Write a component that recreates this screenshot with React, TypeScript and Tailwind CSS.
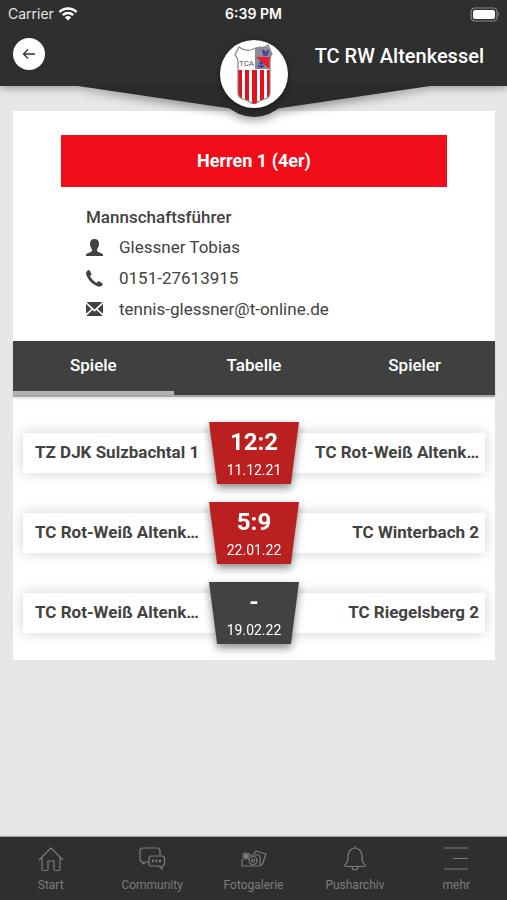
import type { ReactNode } from "react";

const contact = [
  { icon: <UserIcon />, label: "Glessner Tobias" },
  { icon: <PhoneIcon />, label: "0151-27613915", href: "tel:015127613915" },
  { icon: <MailIcon />, label: "tennis-glessner@t-online.de", href: "mailto:tennis-glessner@t-online.de" },
];

const matches = [
  { home: "TZ DJK Sulzbachtal 1", guest: "TC Rot-Weiß Altenk…", score: "12:2", date: "11.12.21", played: true },
  { home: "TC Rot-Weiß Altenk…", guest: "TC Winterbach 2", score: "5:9", date: "22.01.22", played: true },
  { home: "TC Rot-Weiß Altenk…", guest: "TC Riegelsberg 2", score: "-", date: "19.02.22", played: false },
];

function UserIcon() {
  return (
    <svg width="17" height="17" viewBox="0 0 17 17" fill="currentColor">
      <path d="M8.500 0C11.300 0 13 1.700 13 4.500c0 2.200-.8 4.500-2 5.800v1.400c0 .6.700 1 2.400 1.700 2.300.9 3.600 1.400 3.600 2.600v1H0v-1c0-1.200 1.300-1.700 3.600-2.600C5.300 12.700 6 12.300 6 11.700v-1.400C4.800 9 4 6.700 4 4.500 4 1.700 5.700 0 8.500 0z" />
    </svg>
  );
}

function PhoneIcon() {
  return (
    <svg width="17" height="17" viewBox="0 0 17 17" fill="currentColor">
      <path d="M1.800.4C2.700-.1 3.500 0 4 .9l1.300 2.500c.4.800.2 1.400-.5 1.900-.7.500-.8 1-.4 1.700 1.300 2.200 3.200 4.100 5.400 5.400.7.400 1.200.3 1.700-.4.500-.7 1.100-.9 1.900-.5l2.500 1.400c.9.500 1 1.200.5 2-.9 1.500-2.400 2-4.200 1.500C6.600 14.700 1.600 9.400.2 4.200-.2 2.500.4 1.200 1.800.4z" />
    </svg>
  );
}

function MailIcon() {
  return (
    <svg width="17" height="17" viewBox="0 0 17 17" fill="currentColor">
      <path d="M.4 1h16.200L8.500 8.600zM0 2.800l5.400 5.100L0 12.700zM17 2.800v9.900l-5.400-4.800zM6.500 8.900l2 1.900 2-1.900 6.300 6.100H.2z" />
    </svg>
  );
}

function Crest() {
  return (
    <svg width="40" height="60" viewBox="0 0 40 60">
      <defs>
        <clipPath id="shield">
          <path d="M5 3c4 3 8 4 12 3 3-1 6-3 9-3 3 1 6 0 8-2l4 9c-2 2-2 4-2 7v32c0 3-2 5-5 6-4 1-8 3-11 6-3-3-7-5-11-6-3-1-5-3-5-6V18c0-3-1-5-3-7z" />
        </clipPath>
      </defs>
      <g clipPath="url(#shield)">
        <path d="M0 0h40v60H0z" fill="#fff" />
        <path d="M4 26h4v34H4zM11 26h4v34h-4zM18 26h5v34h-5zM26 26h4v34h-4zM33 26h4v34h-4z" fill="#e3101c" />
        <path d="M21 3h19v22H21z" fill="#8b8b95" />
        <path d="M22 13h17L35 25z" fill="#ef1d2b" />
        <path d="m29 6 2 3 3-2-1 4h-3zM27 17v7M24 21c1 3 5 3 6 0M25 19h4" fill="none" stroke="#3a3aa8" strokeWidth="1.500" />
      </g>
      <path d="M5 3c4 3 8 4 12 3 3-1 6-3 9-3 3 1 6 0 8-2l4 9c-2 2-2 4-2 7v32c0 3-2 5-5 6-4 1-8 3-11 6-3-3-7-5-11-6-3-1-5-3-5-6V18c0-3-1-5-3-7z" fill="none" stroke="#858585" strokeWidth="1.200" />
      <text x="5" y="22" fontFamily="Roboto, sans-serif" fontSize="8" fill="#555">TCA</text>
    </svg>
  );
}

function Header() {
  return (
    <header className="relative z-10 bg-[#2f2f2f] text-white shadow-[0_2px_8px_rgba(0,0,0,0.35)]">
      <div className="grid h-7 grid-cols-3 items-center px-2 font-['Inter',sans-serif] text-sm">
        <div className="flex items-center gap-1 text-[#e4e4e4]">
          Carrier
          <svg width="20" height="16" viewBox="0 0 20 16" fill="none" stroke="#fff" strokeWidth="2.500">
            <path d="M1.500 6a12 12 0 0 1 17 0M4.800 9.200a7.500 7.500 0 0 1 10.400 0" />
            <path d="M10 14.500 6.900 11.500a4.500 4.500 0 0 1 6.200 0z" fill="#fff" stroke="none" />
          </svg>
        </div>
        <div className="text-center font-semibold">6:39 PM</div>
        <svg className="justify-self-end" width="31" height="15" viewBox="0 0 31 15">
          <rect x="3" y="1" width="26" height="13" rx="4" fill="none" stroke="#8a8a8a" strokeWidth="1.200" />
          <rect x="5" y="3" width="22" height="9" rx="2" fill="#fff" />
          <path d="M30 5v5c1-1 1-4 0-5z" fill="#8a8a8a" />
        </svg>
      </div>
      <div className="flex h-[58px] items-start justify-between pl-[13px] pr-[23px]">
        <button aria-label="Zurück" className="mt-[10px] flex size-8 items-center justify-center rounded-full bg-white">
          <svg width="14" height="12" viewBox="0 0 14 12" fill="none" stroke="#333" strokeWidth="1.300">
            <path d="M13 6H1.500M6 1.500 1.500 6 6 10.500" />
          </svg>
        </button>
        <h1 className="mt-3 text-xl leading-8 font-medium">TC RW Altenkessel</h1>
      </div>
      {/* wedge with the club crest, hangs over the page */}
      <div className="absolute inset-x-0 top-full flex justify-center">
        <svg className="drop-shadow-[0_4px_4px_rgba(0,0,0,0.35)]" width="352" height="34" viewBox="0 0 352 34">
          <path d="M0 0h352L176 26z" fill="#2a2a2a" />
          <circle cx="176" cy="-8" r="39" fill="#2a2a2a" />
        </svg>
      </div>
      <div className="absolute inset-x-0 top-10 flex justify-center">
        <div className="flex size-[68px] items-center justify-center rounded-full bg-white shadow-[0_1px_4px_1px_rgba(0,0,0,0.35)]">
          <Crest />
        </div>
      </div>
    </header>
  );
}

function Match({ home, guest, score, date, played }: (typeof matches)[number]) {
  return (
    <li className="flex h-[62px] items-center">
      <div className="grid h-10 w-full grid-cols-[minmax(0,1fr)_90px_minmax(0,1fr)] items-center bg-white shadow-[0_0_14px_rgba(0,0,0,0.18)]">
        <div className="truncate pl-3 text-[17px] font-bold">{home}</div>
        <div className="-my-[11px] drop-shadow-[0_4px_4px_rgba(0,0,0,0.45)]">
          <div
            className={`flex h-[62px] flex-col items-center text-white [clip-path:polygon(0_0,100%_0,91%_100%,9%_100%)] ${
              played ? "bg-[#bb2021]" : "bg-[#424242]"
            }`}
          >
            <div className="mt-1 text-2xl leading-8 font-bold">{score}</div>
            <div className="text-sm leading-6">{date}</div>
          </div>
        </div>
        <div className="truncate pr-[6px] text-right text-[17px] font-bold">{guest}</div>
      </div>
    </li>
  );
}

function NavItem({ label, children }: { label: string; children: ReactNode }) {
  return (
    <a href="#" className="flex flex-1 flex-col items-center gap-1 pt-2">
      <svg width="28" height="28" viewBox="0 0 28 28" fill="none" stroke="currentColor" strokeWidth="1.200" strokeLinejoin="round">
        {children}
      </svg>
      <span className="text-xs leading-4">{label}</span>
    </a>
  );
}

export default function App() {
  return (
    <div className="flex min-h-screen flex-col bg-[#e7e7e7] font-['Roboto',sans-serif] text-[#424242]">
      <Header />

      <main className="flex-1 pt-[25px] pr-3 pl-[13px]">
        <div className="bg-white pb-4">
          <div className="px-12 pt-6">
            <button className="h-[52px] w-full bg-[#f00c18] text-lg font-bold text-white">Herren 1 (4er)</button>
          </div>

          <section className="px-[73px] pt-[15px] pb-4 text-[17px]">
            <h2 className="leading-[30px] font-medium">Mannschaftsführer</h2>
            <ul>
              {contact.map((c) => (
                <li key={c.label} className="flex h-[31px] items-center gap-4">
                  {c.icon}
                  {c.href ? <a href={c.href}>{c.label}</a> : <span>{c.label}</span>}
                </li>
              ))}
            </ul>
          </section>

          <nav className="flex border-b-2 border-[#a5a5a5] bg-[#404040] text-[17px] font-medium text-white shadow-[0_2px_3px_rgba(0,0,0,0.1)]">
            <button className="h-[54px] flex-1 border-b-4 border-[#b3b3b3]">Spiele</button>
            <button className="h-[54px] flex-1 border-b-4 border-transparent">Tabelle</button>
            <button className="h-[54px] flex-1 border-b-4 border-transparent">Spieler</button>
          </nav>

          <ul className="flex flex-col gap-[18px] px-[10px] pt-[25px]">
            {matches.map((m) => (
              <Match key={m.date} {...m} />
            ))}
          </ul>
        </div>
      </main>

      <nav className="flex h-[63px] bg-[#2f2f2f] text-[#7c7c7c] shadow-[0_-1px_1px_rgba(0,0,0,0.3)]">
        <NavItem label="Start">
          <path d="M2 15 14 3l12 12M5 13v11c0 1 .5 1.500 1.500 1.500h3c1 0 1.500-.5 1.500-1.500v-8h6v8c0 1 .5 1.500 1.500 1.500h3c1 0 1.500-.5 1.500-1.500V13" />
        </NavItem>
        <NavItem label="Community">
          <path d="M11 17H8l-3 2v-2c-2 0-3-1-3-3V6c0-2 1-3 3-3h14c2 0 3 1 3 3v4M13 11h11c1.500 0 2.500 1 2.500 2.500v5c0 1.500-1 2.500-2.500 2.500v3l-3-3h-8c-1.500 0-2-1-2-2.500v-5c0-1.500.5-2.500 2-2.500z" />
          <path d="M14 16h10" strokeWidth="2.500" strokeDasharray="2 1.500" />
        </NavItem>
        <NavItem label="Fotogalerie">
          <path d="M9 10h9c1 0 2 1 2 2v9H3c-.6 0-1-.4-1-1v-6M14 9l2-3 10 3-4 11h-2" />
          <circle cx="13" cy="15.500" r="4" />
          <circle cx="13" cy="15.500" r="1.500" />
          <circle cx="6" cy="11" r="2" />
          <path d="M6 7v8M2 11h8M3 8l6 6M9 8l-6 6" />
        </NavItem>
        <NavItem label="Pusharchiv">
          <path d="M4 20c3-3 3-5 3-9 0-4 3-8 7-8s7 4 7 8c0 4 0 6 3 9 .5.700 0 1.500-1 1.500H5c-1 0-1.500-.8-1-1.500zM14 1v2M11 22c.5 4 5.500 4 6 0" />
        </NavItem>
        <NavItem label="mehr">
          <path d="M2 3h24M11 13.500h15M2 24h24" />
        </NavItem>
      </nav>
    </div>
  );
}
